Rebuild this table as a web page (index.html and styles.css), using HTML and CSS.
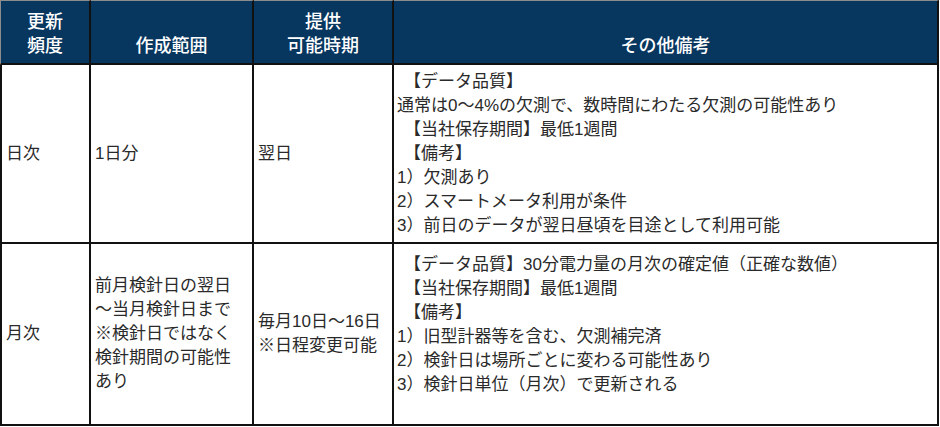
FILE: index.html
```html
<!DOCTYPE html>
<html lang="ja">
<head>
<meta charset="utf-8">
<title>データ提供一覧</title>
<link rel="stylesheet" href="styles.css">
</head>
<body>
<table class="sheet">
  <thead>
    <tr>
      <th class="col1 first">更新<br>頻度</th>
      <th class="col2">作成範囲</th>
      <th class="col3">提供<br>可能時期</th>
      <th class="col4">その他備考</th>
    </tr>
  </thead>
  <tbody>
    <tr class="row-daily">
      <td class="first">日次</td>
      <td>1日分</td>
      <td>翌日</td>
      <td class="notes">
        <div class="line tag">【データ品質】</div>
        <div class="line">通常は0～4%の欠測で、数時間にわたる欠測の可能性あり</div>
        <div class="line tag">【当社保存期間】最低1週間</div>
        <div class="line tag">【備考】</div>
        <div class="line">1）欠測あり</div>
        <div class="line">2）スマートメータ利用が条件</div>
        <div class="line">3）前日のデータが翌日昼頃を目途として利用可能</div>
      </td>
    </tr>
    <tr class="row-monthly">
      <td class="first">月次</td>
      <td>前月検針日の翌日<br>～当月検針日まで<br>※検針日ではなく<br>検針期間の可能性<br>あり</td>
      <td>毎月10日～16日<br>※日程変更可能</td>
      <td class="notes">
        <div class="line tag">【データ品質】30分電力量の月次の確定値（正確な数値）</div>
        <div class="line tag">【当社保存期間】最低1週間</div>
        <div class="line tag">【備考】</div>
        <div class="line">1）旧型計器等を含む、欠測補完済</div>
        <div class="line">2）検針日は場所ごとに変わる可能性あり</div>
        <div class="line">3）検針日単位（月次）で更新される</div>
      </td>
    </tr>
  </tbody>
</table>
</body>
</html>
```

FILE: styles.css
```css
html, body {
  margin: 0;
  padding: 0;
  background: #ffffff;
}

body {
  font-family: "Liberation Sans", "Noto Sans CJK JP", sans-serif;
  color: #2a2a2a;
}

.sheet {
  border-collapse: separate;
  border-spacing: 0;
  table-layout: fixed;
  width: 939px;
}

.sheet th,
.sheet td {
  box-sizing: border-box;
  border-right: 2px solid #111111;
  border-bottom: 2px solid #111111;
}

.sheet .first {
  border-left: 2px solid #111111;
}

.col1 { width: 91px; }
.col2 { width: 163px; }
.col3 { width: 140px; }
.col4 { width: 545px; }

.sheet th {
  height: 65px;
  background: #07365f;
  color: #ffffff;
  font-weight: 500;
  font-size: 18px;
  line-height: 24px;
  text-align: center;
  vertical-align: bottom;
  padding: 0 0 5px 0;
  border-top: 1px solid #8c8c8c;
}

.sheet th.first {
  border-left: 1px solid #8c8c8c;
}

.sheet td {
  font-size: 17px;
  line-height: 24px;
  vertical-align: middle;
  padding: 0 0 0 4px;
  text-align: left;
}

.row-daily td {
  height: 179px;
}

.row-monthly td {
  height: 182px;
}

.sheet td.notes {
  padding: 0 0 0 3px;
}

.row-monthly td.notes {
  padding-bottom: 18px;
}

.line {
  white-space: nowrap;
}

.line.tag {
  padding-left: 7px;
}
```
